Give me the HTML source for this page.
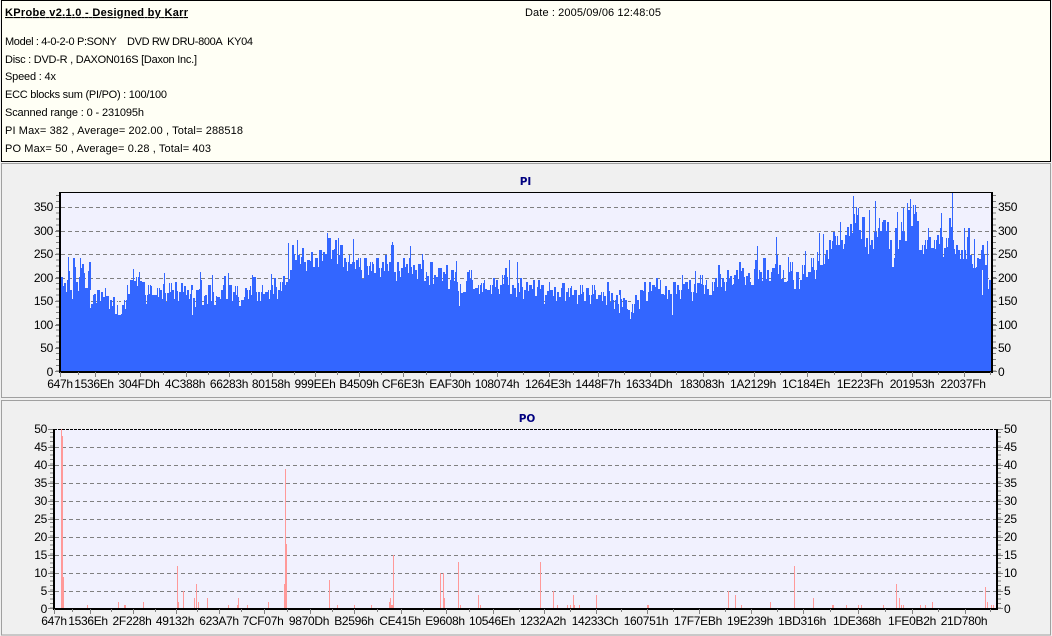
<!DOCTYPE html>
<html><head><meta charset="utf-8"><title>KProbe</title>
<style>
html,body{margin:0;padding:0;background:#f0f0f0;width:1052px;height:636px;overflow:hidden}
svg{display:block}
text{font-family:"Liberation Sans",sans-serif;fill:#000;white-space:pre}
.h{font-size:11px}
.a{font-size:12px;letter-spacing:-.3px}
.m{text-anchor:middle}
.e{text-anchor:end}
.t{font-family:"DejaVu Sans",sans-serif;font-size:10.5px;font-weight:bold;fill:#000080;text-anchor:middle}
</style></head><body>
<svg width="1052" height="636" viewBox="0 0 1052 636" xmlns="http://www.w3.org/2000/svg">
<defs>
<clipPath id="pc"><rect x="60" y="192" width="932" height="180"/></clipPath>
<pattern id="comb" patternUnits="userSpaceOnUse" x="61" y="0" width="37" height="4">
<path fill="#3366ff" shape-rendering="crispEdges" d="M0 0h2v4H0zM3 0h2v4H3zM7 0h4v4H7zM12 0h2v4h-2zM15 0h2v4h-2zM19 0h4v4h-4zM24 0h3v4h-3zM28 0h2v4h-2zM32 0h3v4h-3zM36 0h1v4h-1z"/>
</pattern>
<path id="mass" shape-rendering="crispEdges" d="M61 372
V277h3V283h3V271h3V290h3V258h3V282h3V268h3V264h3V288h3V262h3
V295h3V294h3V290h3V292h3V288h3V296h3V300h3V297h3V305h3V315h3
V305h3V300h3V285h3V280h3V281h3V277h3V272h3V282h3V295h3V285h3
V286h3V295h3V288h3V290h3V284h3V293h3V283h3V290h3V282h3V292h3
V283h3V286h3V290h3V285h3V298h3V290h3V280h3V296h3V295h3V285h3
V292h3V296h3V297h3V290h3V276h3V290h3V285h3V292h3V286h3V297h3
V300h3V288h3V290h3V286h3V277h3V292h3V292h3V285h3V292h3V290h3
V285h3V278h3V290h3V282h3V276h3V282h3V270h3V245h3V260h3V255h3
V248h3V262h3V260h3V252h3V258h3V258h3V250h3V252h3V245h3V238h3
V250h3V240h3V255h3V245h3V258h3V262h3V255h3V262h3V260h3V258h3
V270h3V258h3V266h3V262h3V264h3V258h3V268h3V262h3V255h3V262h3
V245h3V272h3V262h3V268h3V258h3V264h3V258h3V265h3V270h3V264h3
V260h3V272h3V276h3V262h3V275h3V268h3V268h3V272h3V265h3V280h3
V270h3V272h3V282h3V284h3V292h3V272h3V270h3V280h3V288h3V285h3
V283h3V280h3V290h3V285h3V278h3V280h3V285h3V275h3V268h3V285h3
V285h3V288h3V283h3V278h3V290h3V282h3V285h3V280h3V287h3V280h3
V285h3V295h3V282h3V290h3V287h3V292h3V288h3V283h3V292h3V288h3
V286h3V290h3V295h3V285h3V292h3V288h3V295h3V285h3V290h3V295h3
V292h3V296h3V282h3V293h3V300h3V295h3V290h3V298h3V300h3V310h3
V304h3V295h3V300h3V290h3V282h3V292h3V282h3V285h3V278h3V280h3
V294h3V286h3V290h3V285h3V282h3V285h3V290h3V275h3V282h3V280h3
V292h3V284h3V283h3V275h3V285h3V280h3V295h3V282h3V278h3V265h3
V278h3V282h3V270h3V276h3V275h3V270h3V262h3V268h3V276h3V273h3
V285h3V260h3V270h3V272h3V258h3V270h3V272h3V268h3V255h3V265h3
V270h3V282h3V272h3V262h3V280h3V272h3V280h3V265h3V268h3V272h3
V258h3V270h3V252h3V265h3V255h3V250h3V240h3V232h3V236h3V245h3
V240h3V235h3V227h3V224h3V214h3V215h3V230h3V217h3V238h3V245h3
V240h3V232h3V228h3V222h3V220h3V222h3V240h3V258h3V228h3V240h3
V222h3V232h3V210h3V226h3V205h3V212h3V250h3V245h3V240h3V228h3
V248h3V240h3V235h3V228h3V248h3V238h3V218h3V240h3V245h3V250h3
V250h3V250h3V228h3V255h3V268h3V258h3V250h3V245h3V265h3V280h3
V285h1V372Z"/>
</defs>
<rect width="1052" height="636" fill="#f0f0f0"/>
<!-- header -->
<rect x="1.5" y="0.5" width="1049" height="161" fill="#fffff5" stroke="#000"/>
<text class="h" x="5" y="16" font-weight="bold" text-decoration="underline" textLength="183">KProbe v2.1.0 - Designed by Karr</text>
<text class="h" x="525" y="16" textLength="136">Date : 2005/09/06 12:48:05</text>
<text class="h" x="5" y="45" textLength="248">Model : 4-0-2-0 P:SONY    DVD RW DRU-800A  KY04</text>
<text class="h" x="5" y="63" textLength="192">Disc : DVD-R , DAXON016S [Daxon Inc.]</text>
<text class="h" x="5" y="80" textLength="51">Speed : 4x</text>
<text class="h" x="5" y="98" textLength="162">ECC blocks sum (PI/PO) : 100/100</text>
<text class="h" x="5" y="116" textLength="139">Scanned range : 0 - 231095h</text>
<text class="h" x="5" y="134" textLength="238">PI Max= 382 , Average= 202.00 , Total= 288518</text>
<text class="h" x="5" y="152" textLength="206">PO Max= 50 , Average= 0.28 , Total= 403</text>

<!-- panels -->
<rect x="1.5" y="163.5" width="1049" height="234" fill="#f0f0f0" stroke="#a0a0a0"/>
<rect x="1.5" y="400.5" width="1049" height="234.5" fill="#f0f0f0" stroke="#a0a0a0"/>

<!-- PI chart -->
<text class="t" x="525.5" y="185">PI</text>
<rect x="60" y="192" width="932" height="180" fill="#f1f1fe"/>
<g stroke="#808080" stroke-dasharray="4 3" fill="none" shape-rendering="crispEdges">
<path d="M61 207.5H991M61 231.5H991M61 254.5H991M61 278.5H991M61 301.5H991M61 325.5H991M61 348.5H991"/>
</g>
<g clip-path="url(#pc)">
<use href="#mass" fill="url(#comb)"/>
<use href="#mass" fill="#3366ff" transform="translate(0 9)"/>
</g>
<path stroke="#3366ff" fill="none" shape-rendering="crispEdges" d="M68.5 372V257M80.5 372V258M133.5 372V269M164.5 372V273M200.5 372V272M212.5 372V275M228.5 372V273M252.5 372V275M271.5 372V274M288.5 372V243M297.5 372V240M327.5 372V233M338.5 372V238M353.5 372V239M392.5 372V242M410.5 372V246M422.5 372V254M456.5 372V261M509.5 372V260M517.5 372V262M695.5 372V271M757.5 372V246M776.5 372V237M788.5 372V257M805.5 372V251M819.5 372V233M823.5 372V234M840.5 372V222M853.5 372V196M856.5 372V207M858.5 372V208M869.5 372V210M875.5 372V201M879.5 372V218M897.5 372V212M903.5 372V208M907.5 372V203M910.5 372V199M916.5 372V226M941.5 372V213M952.5 372V192M964.5 372V228M974.5 372V239M987.5 372V241"/>
<path stroke="#f1f1fe" fill="none" shape-rendering="crispEdges" d="M459.5 270V306M672.5 280V315M619.5 295V313M631.5 295V312M192.5 290V315M90.5 290V308M118.5 300V315M982.5 270V295"/>
<!-- PI axes -->
<path fill="none" stroke="#000" stroke-width="2" shape-rendering="crispEdges" d="M60 192V373M992 192V373M60 372H993"/>
<path fill="none" stroke="#000" shape-rendering="crispEdges" d="M60 192.5H993"/>
<g fill="none" shape-rendering="crispEdges" stroke="#808080">
<path stroke-width="3" stroke-dasharray="1 4.85" d="M57.5 371.6V195M994.5 371.6V195"/>
<path d="M55 207.5H59M55 231.5H59M55 254.5H59M55 278.5H59M55 301.5H59M55 325.5H59M55 348.5H59M55 371.5H59M993 207.5H997M993 231.5H997M993 254.5H997M993 278.5H997M993 301.5H997M993 325.5H997M993 348.5H997M993 371.5H997"/>
<path d="M60.5 372V377M95.5 372V377M140.5 372V377M186.5 372V377M229.5 372V377M272.5 372V377M315.5 372V377M359.5 372V377M403.5 372V377M450.5 372V377M497.5 372V377M549.5 372V377M598.5 372V377M650.5 372V377M703.5 372V377M754.5 372V377M807.5 372V377M861.5 372V377M912.5 372V377M964.5 372V377"/>
<path d="M78.5 372V375M118.5 372V375M163.5 372V375M208.5 372V375M251.5 372V375M294.5 372V375M337.5 372V375M381.5 372V375M426.5 372V375M473.5 372V375M523.5 372V375M573.5 372V375M624.5 372V375M676.5 372V375M728.5 372V375M780.5 372V375M834.5 372V375M886.5 372V375M938.5 372V375M990.5 372V375"/>
</g>
<text class="a e" x="53" y="211">350</text><text class="a e" x="53" y="235">300</text><text class="a e" x="53" y="258">250</text><text class="a e" x="53" y="282">200</text><text class="a e" x="53" y="305">150</text><text class="a e" x="53" y="329">100</text><text class="a e" x="53" y="352">50</text><text class="a e" x="53" y="376">0</text>
<text class="a" x="998" y="211">350</text><text class="a" x="998" y="235">300</text><text class="a" x="998" y="258">250</text><text class="a" x="998" y="282">200</text><text class="a" x="998" y="305">150</text><text class="a" x="998" y="329">100</text><text class="a" x="998" y="352">50</text><text class="a" x="998" y="376">0</text>
<text class="a m" x="60" y="388">647h</text><text class="a m" x="94" y="388">1536Eh</text><text class="a m" x="139" y="388">304FDh</text><text class="a m" x="185" y="388">4C388h</text><text class="a m" x="229" y="388">66283h</text><text class="a m" x="271" y="388">80158h</text><text class="a m" x="315" y="388">999EEh</text><text class="a m" x="359" y="388">B4509h</text><text class="a m" x="403" y="388">CF6E3h</text><text class="a m" x="450" y="388">EAF30h</text><text class="a m" x="497" y="388">108074h</text><text class="a m" x="548" y="388">1264E3h</text><text class="a m" x="598" y="388">1448F7h</text><text class="a m" x="649" y="388">16334Dh</text><text class="a m" x="702" y="388">183083h</text><text class="a m" x="753" y="388">1A2129h</text><text class="a m" x="806" y="388">1C184Eh</text><text class="a m" x="860" y="388">1E223Fh</text><text class="a m" x="912" y="388">201953h</text><text class="a m" x="963" y="388">22037Fh</text>

<!-- PO chart -->
<text class="t" x="527" y="422">PO</text>
<rect x="54" y="429" width="943" height="180" fill="#f1f1fe"/>
<g stroke="#808080" stroke-dasharray="4 3" fill="none" shape-rendering="crispEdges">
<path d="M55 447.5H996M55 465.5H996M55 483.5H996M55 501.5H996M55 519.5H996M55 537.5H996M55 555.5H996M55 573.5H996M55 591.5H996"/>
</g>
<path stroke="#ff9999" fill="none" shape-rendering="crispEdges" d="M61.5 609V429M62.5 609V436M63.5 609V577M87.5 609V605M118.5 609V602M124.5 609V605M125.5 609V605M143.5 609V602M177.5 609V566M178.5 609V602M183.5 609V591M194.5 609V598M196.5 609V584M198.5 609V602M207.5 609V598M228.5 609V605M237.5 609V605M238.5 609V598M247.5 609V605M268.5 609V602M284.5 609V584M285.5 609V469M286.5 609V544M329.5 609V580M337.5 609V605M354.5 609V605M371.5 609V605M389.5 609V602M390.5 609V598M391.5 609V605M392.5 609V605M393.5 609V555M440.5 609V573M443.5 609V573M444.5 609V598M458.5 609V562M460.5 609V605M478.5 609V595M480.5 609V605M540.5 609V562M553.5 609V591M557.5 609V605M567.5 609V605M570.5 609V605M573.5 609V595M574.5 609V605M579.5 609V605M596.5 609V595M647.5 609V605M648.5 609V605M728.5 609V591M735.5 609V595M741.5 609V605M770.5 609V602M794.5 609V566M813.5 609V598M832.5 609V605M833.5 609V605M846.5 609V605M858.5 609V605M861.5 609V605M883.5 609V605M896.5 609V584M899.5 609V598M901.5 609V605M903.5 609V605M920.5 609V605M925.5 609V605M932.5 609V602M985.5 609V587M987.5 609V602M991.5 609V605M993.5 609V605"/>
<!-- PO axes -->
<path fill="none" stroke="#000" stroke-width="2" shape-rendering="crispEdges" d="M54 429V610M997 429V610M54 609H998"/>
<path fill="none" stroke="#000" stroke-dasharray="3 1" shape-rendering="crispEdges" d="M54 429.5H998"/>
<g fill="none" shape-rendering="crispEdges" stroke="#808080">
<path stroke-width="3" stroke-dasharray="1 3.5" d="M51.5 608.6V429M999.5 608.6V429"/>
<path d="M48 429.5H53M48 447.5H53M48 465.5H53M48 483.5H53M48 501.5H53M48 519.5H53M48 537.5H53M48 555.5H53M48 573.5H53M48 591.5H53M48 608.5H53M998 429.5H1003M998 447.5H1003M998 465.5H1003M998 483.5H1003M998 501.5H1003M998 519.5H1003M998 537.5H1003M998 555.5H1003M998 573.5H1003M998 591.5H1003M998 608.5H1003"/>
<path d="M54.5 609V614M90.5 609V614M133.5 609V614M176.5 609V614M219.5 609V614M264.5 609V614M310.5 609V614M354.5 609V614M401.5 609V614M446.5 609V614M493.5 609V614M544.5 609V614M596.5 609V614M647.5 609V614M699.5 609V614M751.5 609V614M803.5 609V614M858.5 609V614M912.5 609V614M965.5 609V614"/>
<path d="M72.5 609V612M111.5 609V612M155.5 609V612M197.5 609V612M241.5 609V612M287.5 609V612M332.5 609V612M377.5 609V612M423.5 609V612M469.5 609V612M519.5 609V612M570.5 609V612M621.5 609V612M673.5 609V612M725.5 609V612M777.5 609V612M830.5 609V612M885.5 609V612M938.5 609V612M990.5 609V612"/>
</g>
<text class="a e" x="47" y="433">50</text><text class="a e" x="47" y="451">45</text><text class="a e" x="47" y="469">40</text><text class="a e" x="47" y="487">35</text><text class="a e" x="47" y="505">30</text><text class="a e" x="47" y="523">25</text><text class="a e" x="47" y="541">20</text><text class="a e" x="47" y="559">15</text><text class="a e" x="47" y="577">10</text><text class="a e" x="47" y="595">5</text><text class="a e" x="47" y="613">0</text>
<text class="a" x="1004" y="433">50</text><text class="a" x="1004" y="451">45</text><text class="a" x="1004" y="469">40</text><text class="a" x="1004" y="487">35</text><text class="a" x="1004" y="505">30</text><text class="a" x="1004" y="523">25</text><text class="a" x="1004" y="541">20</text><text class="a" x="1004" y="559">15</text><text class="a" x="1004" y="577">10</text><text class="a" x="1004" y="595">5</text><text class="a" x="1004" y="613">0</text>
<text class="a m" x="54" y="625">647h</text><text class="a m" x="88" y="625">1536Eh</text><text class="a m" x="132" y="625">2F228h</text><text class="a m" x="175" y="625">49132h</text><text class="a m" x="219" y="625">623A7h</text><text class="a m" x="263" y="625">7CF07h</text><text class="a m" x="309" y="625">9870Dh</text><text class="a m" x="354" y="625">B2596h</text><text class="a m" x="400" y="625">CE415h</text><text class="a m" x="445" y="625">E9608h</text><text class="a m" x="492" y="625">10546Eh</text><text class="a m" x="543" y="625">1232A2h</text><text class="a m" x="595" y="625">14233Ch</text><text class="a m" x="646" y="625">160751h</text><text class="a m" x="698" y="625">17F7EBh</text><text class="a m" x="750" y="625">19E239h</text><text class="a m" x="802" y="625">1BD316h</text><text class="a m" x="857" y="625">1DE368h</text><text class="a m" x="912" y="625">1FE0B2h</text><text class="a m" x="964" y="625">21D780h</text>
</svg>
</body></html>
